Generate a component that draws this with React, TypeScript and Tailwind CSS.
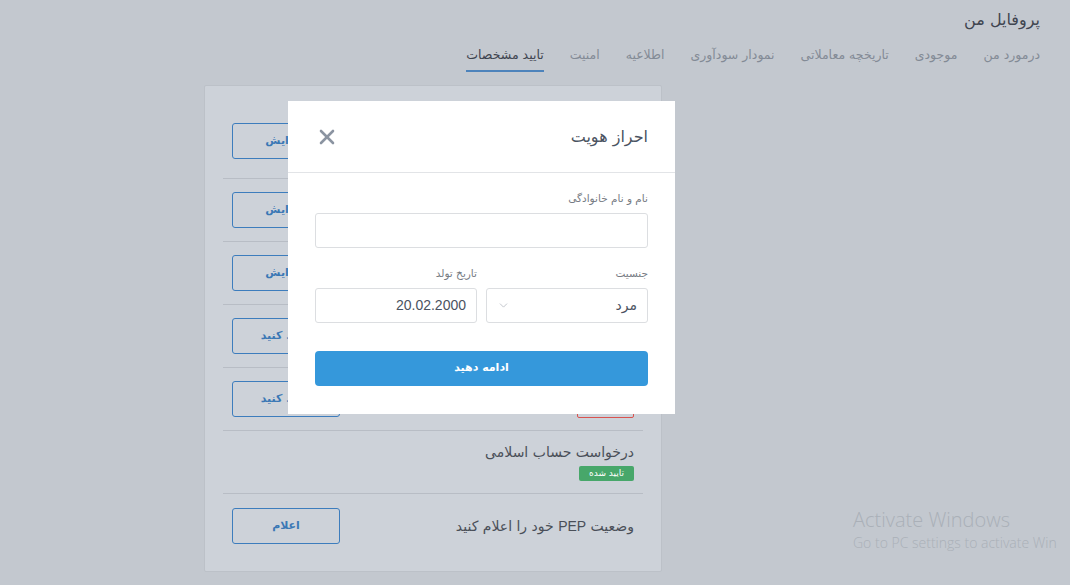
import { X, ChevronDown } from "lucide-react";

const fa = { fontFamily: '"DejaVu Sans", "Noto Sans", sans-serif' };

const tabs = [
    { label: "درمورد من" },
    { label: "موجودی" },
    { label: "تاریخچه معاملاتی" },
    { label: "نمودار سودآوری" },
    { label: "اطلاعیه" },
    { label: "امنیت" },
    { label: "تایید مشخصات", active: true },
];

function OutlineButton({ children }: { children: React.ReactNode }) {
    return (
        <button className="w-[108px] h-[36px] border border-[#3d7dbd] rounded-[3px] text-[11px] font-bold text-[#3a78b5] shrink-0">
            {children}
        </button>
    );
}

function Row({ title, children, badge }: { title?: string; children?: React.ReactNode; badge?: React.ReactNode }) {
    return (
        <div className="h-[63px] border-t border-[#b8bdc5] flex items-center justify-between px-[9px]">
            <div className="flex flex-col items-start gap-[3px]">
                {title && <span className="text-[14px] text-[#4a4f58]">{title}</span>}
                {badge}
            </div>
            {children}
        </div>
    );
}

export default function App() {
    return (
        <div dir="rtl" style={fa} className="relative w-[1070px] h-[585px] overflow-hidden bg-[#c3c8cf]">
            {/* page header */}
            <div className="pr-[30px] pt-[9px]">
                <h1 className="text-[16px] text-[#3f4550] leading-[22px]">پروفایل من</h1>
                <nav className="flex gap-[26px] mt-[15px]">
                    {tabs.map((t) => (
                        <span
                            key={t.label}
                            className={
                                t.active
                                    ? "text-[12.5px] text-[#3f4550] pb-[5px] border-b-2 border-[#4d83bb]"
                                    : "text-[12.5px] text-[#838b96] pb-[5px]"
                            }
                        >
                            {t.label}
                        </span>
                    ))}
                </nav>
            </div>

            {/* verification card */}
            <div className="mr-[408px] mt-[13px] w-[458px] h-[487px] bg-[#cdd2d9] border border-[#bcc1c8] rounded-[2px] px-[18px]">
                <div className="h-[92px] flex items-end justify-between px-[9px] pb-[19px]">
                    <span />
                    <OutlineButton>ویرایش</OutlineButton>
                </div>
                <Row>
                    <OutlineButton>ویرایش</OutlineButton>
                </Row>
                <Row>
                    <OutlineButton>ویرایش</OutlineButton>
                </Row>
                <Row>
                    <OutlineButton>آپلود کنید</OutlineButton>
                </Row>
                <Row
                    badge={
                        <span className="mt-[22px] h-[16px] w-[57px] border border-[#d9534f] rounded-[2px] text-[9px] text-[#d9534f] flex items-center justify-center">
                            تایید نشده
                        </span>
                    }
                >
                    <OutlineButton>آپلود کنید</OutlineButton>
                </Row>
                <Row
                    title="درخواست حساب اسلامی"
                    badge={
                        <span className="h-[15px] w-[55px] bg-[#47a76a] rounded-[2px] text-[9px] text-white flex items-center justify-center">
                            تایید شده
                        </span>
                    }
                />
                <div className="h-[66px] border-t border-[#b8bdc5] flex items-center justify-between px-[9px]">
                    <span className="text-[14px] text-[#4a4f58]">
                        وضعیت <span style={{ fontFamily: '"Liberation Sans", sans-serif' }}>PEP</span> خود را اعلام کنید
                    </span>
                    <OutlineButton>اعلام</OutlineButton>
                </div>
            </div>

            {/* identity modal */}
            <div className="absolute left-[288px] top-[101px] w-[387px] h-[313px] bg-white">
                <div className="h-[72px] border-b border-[#e2e4e7] flex items-center justify-between px-[27px]">
                    <h2 className="text-[16px] text-[#4b5361]">احراز هویت</h2>
                    <X className="w-[24px] h-[24px] text-[#8b94a1]" strokeWidth={2.6} />
                </div>
                <div className="px-[27px] pt-[17px]">
                    <label className="block text-[10.5px] text-[#777c84] leading-[16px]">نام و نام خانوادگی</label>
                    <div className="mt-[7px] h-[35px] border border-[#dcdee1] rounded-[3px]" />
                    <div className="mt-[17px] grid grid-cols-2 gap-[9px]">
                        <div>
                            <label className="block text-[10.5px] text-[#777c84] leading-[16px]">جنسیت</label>
                            <div className="mt-[7px] h-[35px] border border-[#dcdee1] rounded-[3px] flex items-center justify-between px-[10px]">
                                <span className="text-[14px] text-[#4b5361]">مرد</span>
                                <ChevronDown className="w-[13px] h-[13px] text-[#a3a9b1]" strokeWidth={1.2} />
                            </div>
                        </div>
                        <div>
                            <label className="block text-[10.5px] text-[#777c84] leading-[16px]">تاریخ تولد</label>
                            <div className="mt-[7px] h-[35px] border border-[#dcdee1] rounded-[3px] flex items-center px-[10px]">
                                <span className="text-[14px] text-[#4b5361]" style={{ fontFamily: '"Liberation Sans", sans-serif' }}>
                                    20.02.2000
                                </span>
                            </div>
                        </div>
                    </div>
                    <button className="mt-[28px] w-full h-[35px] bg-[#3598db] rounded-[4px] text-white text-[11px] font-bold">
                        ادامه دهید
                    </button>
                </div>
            </div>

            {/* system watermark */}
            <div dir="ltr" className="absolute left-[853px] top-[508px] whitespace-nowrap text-[#aab0b8]" style={{ fontFamily: '"Open Sans", sans-serif' }}>
                <div className="text-[20px] font-light leading-[24px]">Activate Windows</div>
                <div className="text-[14px] font-light leading-[22px]">Go to PC settings to activate Win</div>
            </div>
        </div>
    );
}
